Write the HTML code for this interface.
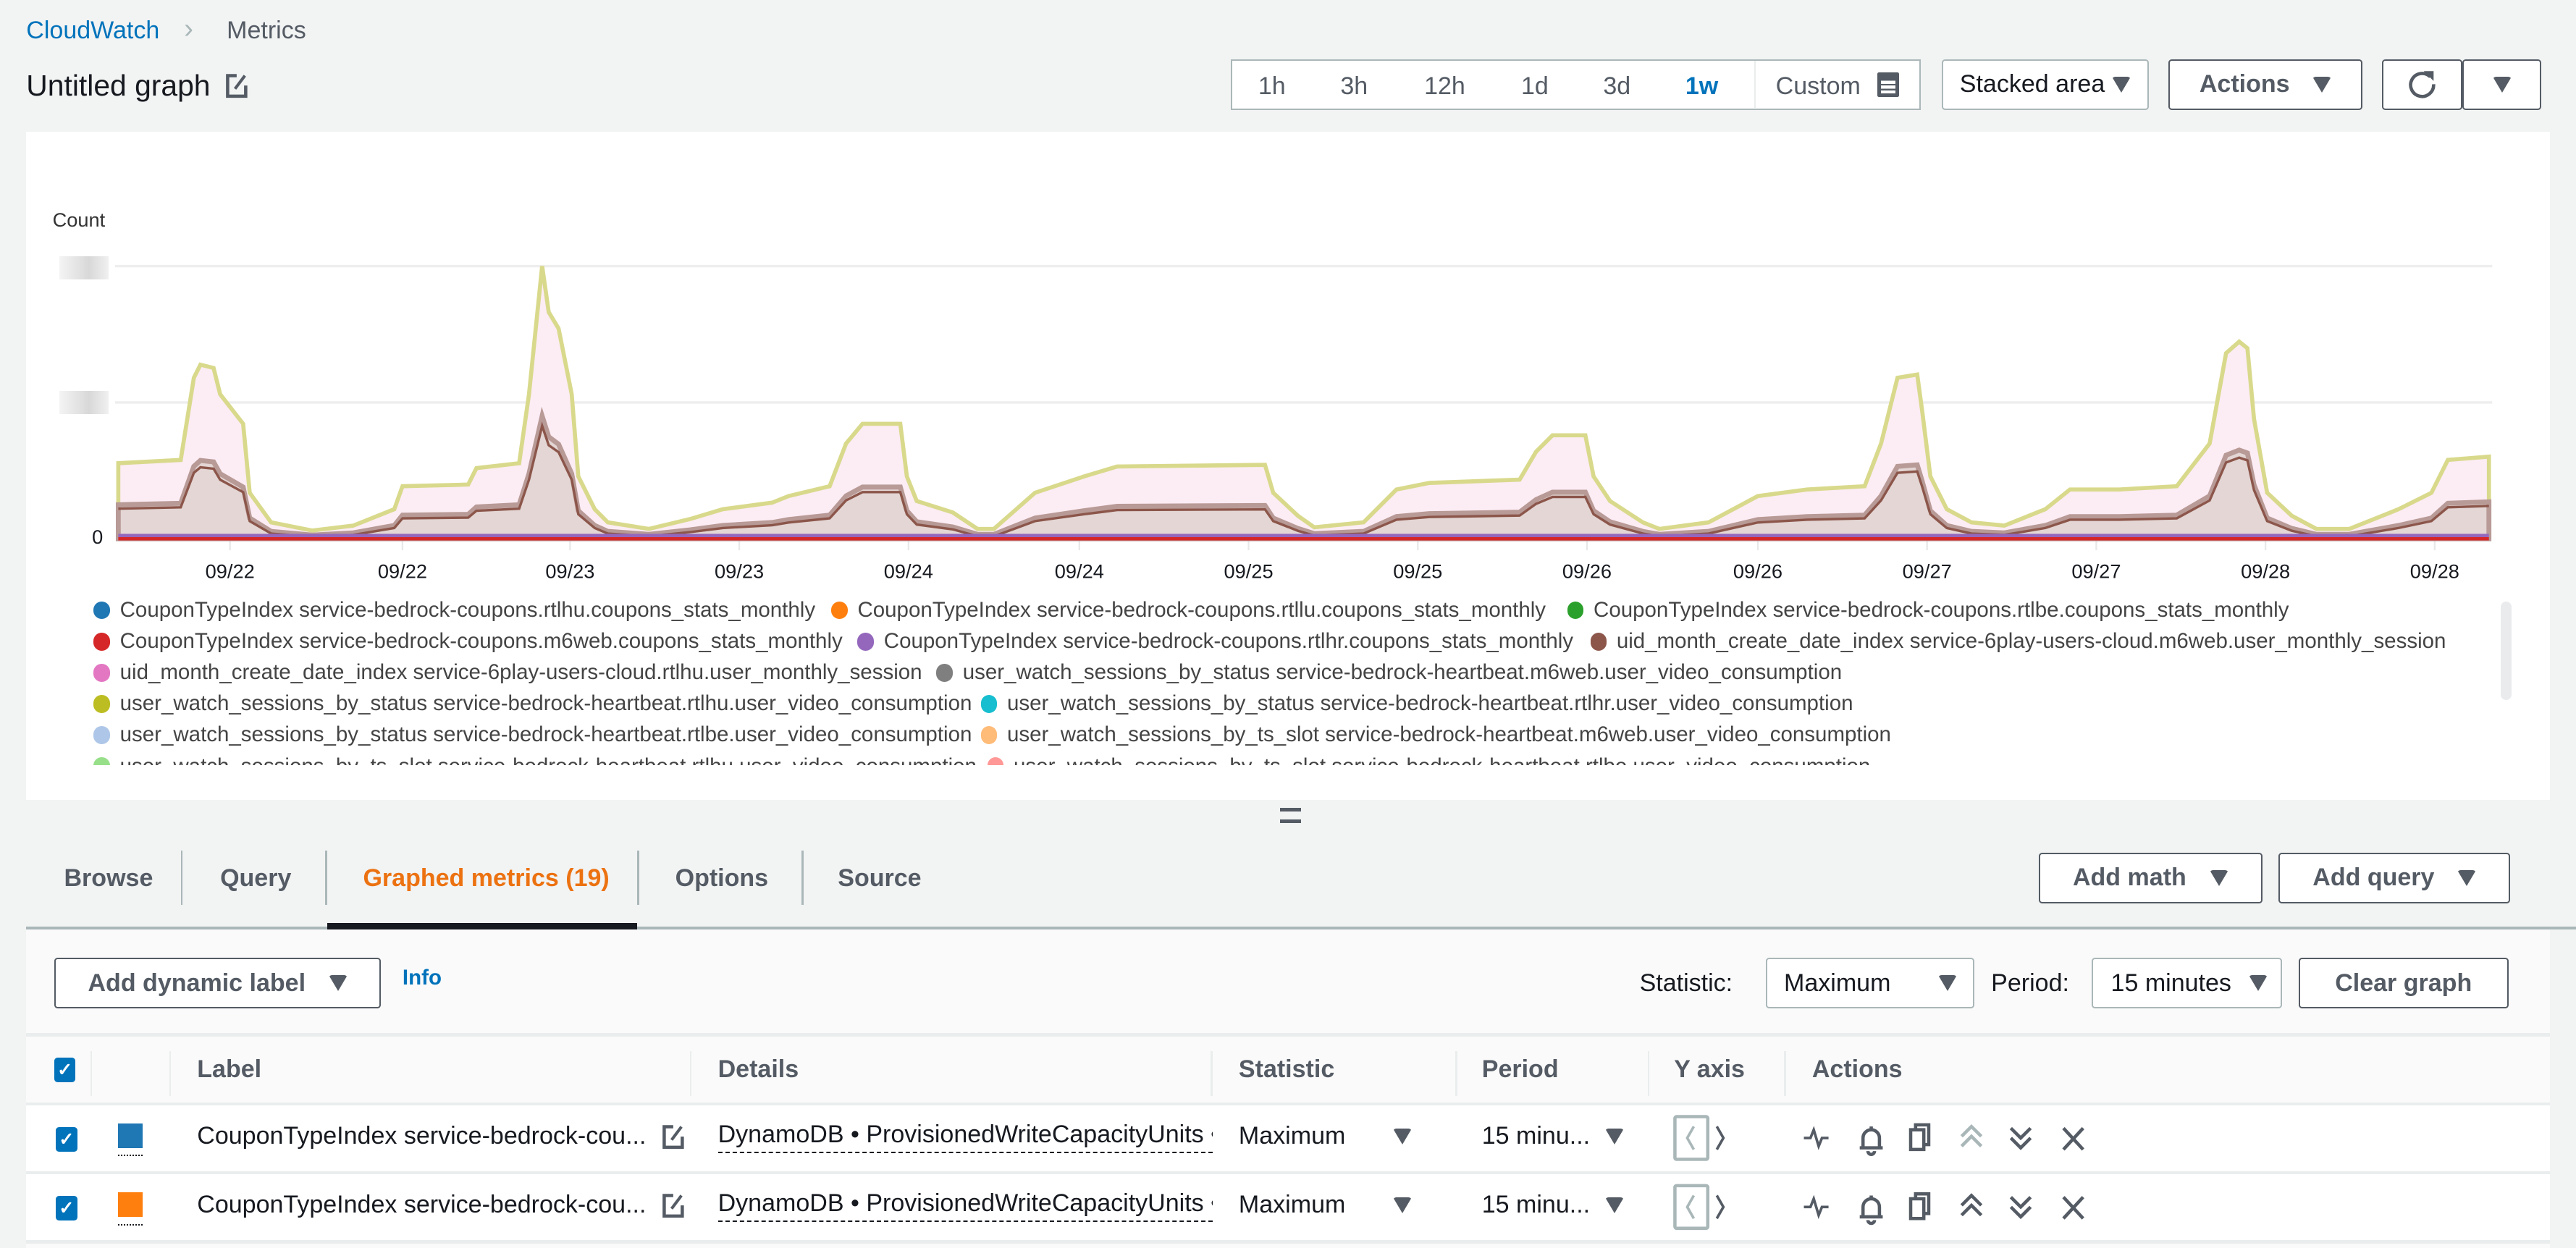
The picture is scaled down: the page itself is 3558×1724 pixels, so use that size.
<!DOCTYPE html>
<html><head><meta charset="utf-8">
<style>
html,body{margin:0;padding:0;background:#f2f3f3;width:3558px;height:1724px;overflow:hidden}
#r{zoom:2.26913;width:1568px;height:760px;position:relative;font-family:"Liberation Sans",sans-serif;color:#16191f;overflow:hidden}
.a{position:absolute}
.btn{position:absolute;box-sizing:border-box;border:1px solid #545b64;border-radius:2px;background:#fff;font-weight:bold;font-size:15px;color:#545b64;display:flex;align-items:center;justify-content:center;gap:14px}
.tri{display:inline-block;width:0;height:0;border-left:6px solid transparent;border-right:6px solid transparent;border-top:10px solid #545b64;border-radius:2px}
.sel{position:absolute;box-sizing:border-box;border:1px solid #aab7b8;border-radius:2px;background:#fff;font-size:15px;display:flex;align-items:center;padding:0 10px;justify-content:space-between}
.lg{position:absolute;left:0;top:362px;width:1520px;height:104px;overflow:hidden;font-size:13px;color:#444}
.lg span{position:absolute;display:flex;align-items:center;height:19px;white-space:nowrap}
.lg i{display:inline-block;width:10px;height:11px;border-radius:5px;margin-right:6px}
.th{position:absolute;top:630px;height:42px;font-weight:bold;font-size:15px;color:#545b64;display:flex;align-items:center}
.cb{position:absolute;width:13px;height:15px;background:#0073bb;border-radius:2px;color:#fff;font-size:11px;font-weight:bold;text-align:center;line-height:15px}
.td{position:absolute;font-size:15px;color:#16191f}
</style></head><body><div id="r">
<div class="a" style="left:16px;top:10px;font-size:15px;color:#0073bb">CloudWatch</div>
<div class="a" style="left:112px;top:8px;font-size:17px;color:#aab7b8">&#x203A;</div>
<div class="a" style="left:138px;top:10px;font-size:15px;color:#545b64">Metrics</div>
<div class="a" style="left:16px;top:42px;font-size:18px">Untitled graph</div>
<svg class="a" style="left:137px;top:44px" width="14" height="16" viewBox="0 0 14 16"><path d="M7 2H1.5v12.5h11V8" fill="none" stroke="#545b64" stroke-width="2"/><path d="M6 10l6-8" stroke="#545b64" stroke-width="1.8"/></svg>

<div class="a" style="left:749px;top:36px;width:420px;height:31px;box-sizing:border-box;border:1px solid #aab7b8;background:#fff;font-size:15px;color:#545b64">
<span class="a" style="left:16px;top:7px">1h</span><span class="a" style="left:66px;top:7px">3h</span><span class="a" style="left:117px;top:7px">12h</span><span class="a" style="left:176px;top:7px">1d</span><span class="a" style="left:226px;top:7px">3d</span><span class="a" style="left:276px;top:7px;color:#0073bb;font-weight:bold">1w</span>
<span class="a" style="left:318px;top:0;width:1px;height:29px;background:#eaeded"></span>
<span class="a" style="left:331px;top:7px">Custom</span>
<span class="a" style="left:393px;top:7px;width:13px;height:15px;background:#545b64;border-radius:1px"></span>
<span class="a" style="left:395px;top:11px;width:9px;height:9px;background:repeating-linear-gradient(#545b64 0 1px,#fff 1px 3px)"></span>
</div>
<div class="sel" style="left:1182px;top:36px;width:126px;height:31px;color:#16191f"><span>Stacked area</span><span class="tri"></span></div>
<div class="btn" style="left:1320px;top:36px;width:118px;height:31px">Actions <span class="tri"></span></div>
<div class="btn" style="left:1450px;top:36px;width:49px;height:31px"><svg width="18" height="18" viewBox="0 0 18 18"><path d="M14 4.5A7 7 0 1 0 16 9" fill="none" stroke="#545b64" stroke-width="2"/><path d="M10 1h6v6z" fill="#545b64"/></svg></div>
<div class="btn" style="left:1499px;top:36px;width:48px;height:31px"><span class="tri"></span></div>

<div class="a" style="left:16px;top:80px;width:1536px;height:407px;background:#fff"></div>
<div class="a" style="left:32px;top:127px;font-size:12px;color:#333">Count</div>
<div class="a" style="left:36px;top:156px;width:30px;height:14px;background:linear-gradient(90deg,#f4f4f4,#e2e2e2 40%,#d8d8d8 60%,#f0f0f0)"></div>
<div class="a" style="left:36px;top:238px;width:30px;height:14px;background:linear-gradient(90deg,#f4f4f4,#e2e2e2 40%,#d8d8d8 60%,#f0f0f0)"></div>
<div class="a" style="left:56px;top:320px;font-size:12px">0</div>
<svg class="a" style="left:0;top:0" width="1568" height="360">
<line x1="70" y1="162" x2="1517" y2="162" stroke="#eee" stroke-width="1.5"/>
<line x1="70" y1="245" x2="1517" y2="245" stroke="#eee" stroke-width="1.5"/>
<g stroke="#e8e8e8"><line x1="140" y1="328" x2="140" y2="335"/><line x1="245" y1="328" x2="245" y2="335"/><line x1="347" y1="328" x2="347" y2="335"/><line x1="450" y1="328" x2="450" y2="335"/><line x1="553" y1="328" x2="553" y2="335"/><line x1="657" y1="328" x2="657" y2="335"/><line x1="760" y1="328" x2="760" y2="335"/><line x1="863" y1="328" x2="863" y2="335"/><line x1="966" y1="328" x2="966" y2="335"/><line x1="1070" y1="328" x2="1070" y2="335"/><line x1="1173" y1="328" x2="1173" y2="335"/><line x1="1276" y1="328" x2="1276" y2="335"/><line x1="1379" y1="328" x2="1379" y2="335"/><line x1="1482" y1="328" x2="1482" y2="335"/></g>
<path d="M72 282L110 280L118 230L122 222L130 224L134 240L148 258L152 300L165 318L190 323L215 320L240 310L245 296L285 295L290 285L316 282L322 240L330 162L334 190L340 200L348 240L352 290L362 310L370 318L395 322L420 316L440 310L470 306L480 302L505 296L515 270L525 258L548 258L552 290L558 305L580 312L595 322L605 322L630 300L660 290L680 284L770 283L775 300L790 314L800 321L830 318L850 298L870 294L925 292L935 275L945 265L965 265L970 290L980 305L1000 318L1010 322L1040 318L1070 302L1100 298L1135 296L1145 270L1155 230L1167 228L1170 250L1175 290L1185 310L1200 318L1220 320L1245 310L1260 298L1290 298L1325 296L1345 270L1355 215L1363 208L1368 212L1372 255L1380 300L1395 314L1410 322L1430 322L1460 310L1480 300L1490 280L1515 278L1515 328L72 328Z" fill="#fcecf4" stroke="#d9d98c" stroke-width="2.5"/>
<g transform="translate(0,328) scale(1,0.45) translate(0,-328)"><path vector-effect="non-scaling-stroke" d="M72 282L110 280L118 230L122 222L130 224L134 240L148 258L152 300L165 318L190 323L215 320L240 310L245 296L285 295L290 285L316 282L322 240L330 162L334 190L340 200L348 240L352 290L362 310L370 318L395 322L420 316L440 310L470 306L480 302L505 296L515 270L525 258L548 258L552 290L558 305L580 312L595 322L605 322L630 300L660 290L680 284L770 283L775 300L790 314L800 321L830 318L850 298L870 294L925 292L935 275L945 265L965 265L970 290L980 305L1000 318L1010 322L1040 318L1070 302L1100 298L1135 296L1145 270L1155 230L1167 228L1170 250L1175 290L1185 310L1200 318L1220 320L1245 310L1260 298L1290 298L1325 296L1345 270L1355 215L1363 208L1368 212L1372 255L1380 300L1395 314L1410 322L1430 322L1460 310L1480 300L1490 280L1515 278L1515 328L72 328Z" fill="#e3d6d4" stroke="#b89a96" stroke-width="3"/></g>
<g transform="translate(0,329) scale(1,0.42) translate(0,-328)"><path vector-effect="non-scaling-stroke" d="M72 282L110 280L118 230L122 222L130 224L134 240L148 258L152 300L165 318L190 323L215 320L240 310L245 296L285 295L290 285L316 282L322 240L330 162L334 190L340 200L348 240L352 290L362 310L370 318L395 322L420 316L440 310L470 306L480 302L505 296L515 270L525 258L548 258L552 290L558 305L580 312L595 322L605 322L630 300L660 290L680 284L770 283L775 300L790 314L800 321L830 318L850 298L870 294L925 292L935 275L945 265L965 265L970 290L980 305L1000 318L1010 322L1040 318L1070 302L1100 298L1135 296L1145 270L1155 230L1167 228L1170 250L1175 290L1185 310L1200 318L1220 320L1245 310L1260 298L1290 298L1325 296L1345 270L1355 215L1363 208L1368 212L1372 255L1380 300L1395 314L1410 322L1430 322L1460 310L1480 300L1490 280L1515 278" fill="none" stroke="#8c564b" stroke-width="1.5"/></g>
<rect x="72" y="325" width="1443" height="2" fill="#9467bd"/><rect x="72" y="327" width="1443" height="2" fill="#d62728"/>
<g font-size="12" fill="#16191f" text-anchor="middle"><text x="140" y="352">09/22</text><text x="245" y="352">09/22</text><text x="347" y="352">09/23</text><text x="450" y="352">09/23</text><text x="553" y="352">09/24</text><text x="657" y="352">09/24</text><text x="760" y="352">09/25</text><text x="863" y="352">09/25</text><text x="966" y="352">09/26</text><text x="1070" y="352">09/26</text><text x="1173" y="352">09/27</text><text x="1276" y="352">09/27</text><text x="1379" y="352">09/28</text><text x="1482" y="352">09/28</text></g>
</svg>
<div class="lg">
<span style="left:57px;top:0"><i style="background:#1f77b4"></i>CouponTypeIndex service-bedrock-coupons.rtlhu.coupons_stats_monthly</span>
<span style="left:506px;top:0"><i style="background:#ff7f0e"></i>CouponTypeIndex service-bedrock-coupons.rtllu.coupons_stats_monthly</span>
<span style="left:954px;top:0"><i style="background:#2ca02c"></i>CouponTypeIndex service-bedrock-coupons.rtlbe.coupons_stats_monthly</span>
<span style="left:57px;top:19px"><i style="background:#d62728"></i>CouponTypeIndex service-bedrock-coupons.m6web.coupons_stats_monthly</span>
<span style="left:522px;top:19px"><i style="background:#9467bd"></i>CouponTypeIndex service-bedrock-coupons.rtlhr.coupons_stats_monthly</span>
<span style="left:968px;top:19px"><i style="background:#8c564b"></i>uid_month_create_date_index service-6play-users-cloud.m6web.user_monthly_session</span>
<span style="left:57px;top:38px"><i style="background:#e377c2"></i>uid_month_create_date_index service-6play-users-cloud.rtlhu.user_monthly_session</span>
<span style="left:570px;top:38px"><i style="background:#7f7f7f"></i>user_watch_sessions_by_status service-bedrock-heartbeat.m6web.user_video_consumption</span>
<span style="left:57px;top:57px"><i style="background:#bcbd22"></i>user_watch_sessions_by_status service-bedrock-heartbeat.rtlhu.user_video_consumption</span>
<span style="left:597px;top:57px"><i style="background:#17becf"></i>user_watch_sessions_by_status service-bedrock-heartbeat.rtlhr.user_video_consumption</span>
<span style="left:57px;top:76px"><i style="background:#aec7e8"></i>user_watch_sessions_by_status service-bedrock-heartbeat.rtlbe.user_video_consumption</span>
<span style="left:597px;top:76px"><i style="background:#ffbb78"></i>user_watch_sessions_by_ts_slot service-bedrock-heartbeat.m6web.user_video_consumption</span>
<span style="left:57px;top:95px"><i style="background:#98df8a"></i>user_watch_sessions_by_ts_slot service-bedrock-heartbeat.rtlhu.user_video_consumption</span>
<span style="left:601px;top:95px"><i style="background:#ff9896"></i>user_watch_sessions_by_ts_slot service-bedrock-heartbeat.rtlbe.user_video_consumption</span>
</div>
<div class="a" style="left:1522px;top:366px;width:7px;height:60px;background:#e9ebed;border-radius:4px"></div>

<div class="a" style="left:779px;top:492px;width:13px;height:2px;background:#545b64"></div>
<div class="a" style="left:779px;top:499px;width:13px;height:2px;background:#545b64"></div>

<div class="a" style="left:39px;top:526px;font-size:15px;font-weight:bold;color:#545b64">Browse</div>
<div class="a" style="left:110px;top:518px;width:1px;height:33px;background:#aab7b8"></div>
<div class="a" style="left:134px;top:526px;font-size:15px;font-weight:bold;color:#545b64">Query</div>
<div class="a" style="left:198px;top:518px;width:1px;height:33px;background:#aab7b8"></div>
<div class="a" style="left:221px;top:526px;font-size:15px;font-weight:bold;color:#ec7211">Graphed metrics (19)</div>
<div class="a" style="left:388px;top:518px;width:1px;height:33px;background:#aab7b8"></div>
<div class="a" style="left:411px;top:526px;font-size:15px;font-weight:bold;color:#545b64">Options</div>
<div class="a" style="left:488px;top:518px;width:1px;height:33px;background:#aab7b8"></div>
<div class="a" style="left:510px;top:526px;font-size:15px;font-weight:bold;color:#545b64">Source</div>
<div class="btn" style="left:1241px;top:519px;width:136px;height:31px">Add math <span class="tri"></span></div>
<div class="btn" style="left:1387px;top:519px;width:141px;height:31px">Add query <span class="tri"></span></div>
<div class="a" style="left:16px;top:564px;width:1552px;height:2px;background:#aab7b8"></div>
<div class="a" style="left:199px;top:562px;width:189px;height:4px;background:#16191f"></div>

<div class="a" style="left:16px;top:566px;width:1536px;height:194px;background:#fafafa"></div>
<div class="btn" style="left:33px;top:583px;width:199px;height:31px">Add dynamic label <span class="tri"></span></div>
<div class="a" style="left:245px;top:588px;font-size:13px;font-weight:bold;color:#0073bb">Info</div>
<div class="a" style="left:998px;top:590px;font-size:15px">Statistic:</div>
<div class="sel" style="left:1075px;top:583px;width:127px;height:31px"><span>Maximum</span><span class="tri"></span></div>
<div class="a" style="left:1212px;top:590px;font-size:15px">Period:</div>
<div class="sel" style="left:1273px;top:583px;width:116px;height:31px;padding:0 8px 0 11px"><span>15 minutes</span><span class="tri"></span></div>
<div class="btn" style="left:1399px;top:583px;width:128px;height:31px">Clear graph</div>

<div class="a" style="left:16px;top:629px;width:1536px;height:2px;background:#eaeded"></div>
<div class="cb" style="left:33px;top:644px">✓</div>
<div class="a" style="left:55px;top:640px;width:1px;height:27px;background:#eaeded"></div>
<div class="a" style="left:103px;top:640px;width:1px;height:27px;background:#eaeded"></div>
<div class="th" style="left:120px">Label</div>
<div class="a" style="left:420px;top:640px;width:1px;height:27px;background:#eaeded"></div>
<div class="th" style="left:437px">Details</div>
<div class="a" style="left:737px;top:640px;width:1px;height:27px;background:#eaeded"></div>
<div class="th" style="left:754px">Statistic</div>
<div class="a" style="left:886px;top:640px;width:1px;height:27px;background:#eaeded"></div>
<div class="th" style="left:902px">Period</div>
<div class="a" style="left:1003px;top:640px;width:1px;height:27px;background:#eaeded"></div>
<div class="th" style="left:1019px">Y axis</div>
<div class="a" style="left:1086px;top:640px;width:1px;height:27px;background:#eaeded"></div>
<div class="th" style="left:1103px">Actions</div>
<div class="a" style="left:16px;top:671px;width:1536px;height:2px;background:#eaeded"></div>

<div class="a" style="left:16px;top:673px;width:1536px;height:40px;background:#fff"></div>
<div class="a" style="left:16px;top:713px;width:1536px;height:2px;background:#eaeded"></div>
<div class="a" style="left:16px;top:715px;width:1536px;height:40px;background:#fff"></div>
<div class="a" style="left:16px;top:755px;width:1536px;height:2px;background:#eaeded"></div>

<div class="cb" style="left:34px;top:686px">✓</div>
<div class="a" style="left:72px;top:684px;width:15px;height:15px;background:#1f77b4"></div>
<div class="a" style="left:72px;top:703px;width:15px;border-top:1px dotted #16191f"></div>
<div class="td" style="left:120px;top:683px">CouponTypeIndex service-bedrock-cou...</div>
<svg class="a" style="left:403px;top:684px" width="14" height="16" viewBox="0 0 14 16"><path d="M7 2H1.5v12.5h11V8" fill="none" stroke="#545b64" stroke-width="2"/><path d="M6 10l6-8" stroke="#545b64" stroke-width="1.8"/></svg>
<div class="td" style="left:437px;top:682px;width:301px;overflow:hidden;white-space:nowrap;border-bottom:1px dashed #16191f;padding-bottom:2px">DynamoDB • ProvisionedWriteCapacityUnits • </div>
<div class="td" style="left:754px;top:683px">Maximum</div><span class="tri a" style="left:848px;top:687px"></span>
<div class="td" style="left:902px;top:683px">15 minu...</div><span class="tri a" style="left:977px;top:687px"></span>
<div class="cb" style="left:34px;top:728px">✓</div>
<div class="a" style="left:72px;top:726px;width:15px;height:15px;background:#ff7f0e"></div>
<div class="a" style="left:72px;top:745px;width:15px;border-top:1px dotted #16191f"></div>
<div class="td" style="left:120px;top:725px">CouponTypeIndex service-bedrock-cou...</div>
<svg class="a" style="left:403px;top:726px" width="14" height="16" viewBox="0 0 14 16"><path d="M7 2H1.5v12.5h11V8" fill="none" stroke="#545b64" stroke-width="2"/><path d="M6 10l6-8" stroke="#545b64" stroke-width="1.8"/></svg>
<div class="td" style="left:437px;top:724px;width:301px;overflow:hidden;white-space:nowrap;border-bottom:1px dashed #16191f;padding-bottom:2px">DynamoDB • ProvisionedWriteCapacityUnits • </div>
<div class="td" style="left:754px;top:725px">Maximum</div><span class="tri a" style="left:848px;top:729px"></span>
<div class="td" style="left:902px;top:725px">15 minu...</div><span class="tri a" style="left:977px;top:729px"></span>

<svg class="a" style="left:1018px;top:678px" width="260" height="80" viewBox="0 0 260 80">
<g fill="none" stroke-width="1.6">
<rect x="1.5" y="2" width="20" height="26" rx="1" stroke="#aab7b8" stroke-width="2"/>
<path d="M13 8l-4 7 4 7" stroke="#aab7b8"/><path d="M27 8l4 7-4 7" stroke="#545b64"/>
<path d="M80 15h4l2-5 3 10 2-5h4" stroke="#545b64"/>
<path d="M114 21h14M116 21v-6a5 5 0 0 1 10 0v6M121 8v2M119 23a2 2 0 0 0 4 0" stroke="#545b64" stroke-width="2"/>
<path d="M145 10h8v12h-8zM148 10V7h8v12h-3" stroke="#545b64" stroke-width="2"/>
<path d="M176 14l6-6 6 6M176 20l6-6 6 6" stroke="#aab7b8" stroke-width="2"/>
<path d="M206 9l6 6 6-6M206 15l6 6 6-6" stroke="#545b64" stroke-width="2"/>
<path d="M238 9l12 13M250 9l-12 13" stroke="#545b64" stroke-width="2"/>
<rect x="1.5" y="44" width="20" height="26" rx="1" stroke="#aab7b8" stroke-width="2"/>
<path d="M13 50l-4 7 4 7" stroke="#aab7b8"/><path d="M27 50l4 7-4 7" stroke="#545b64"/>
<path d="M80 57h4l2-5 3 10 2-5h4" stroke="#545b64"/>
<path d="M114 63h14M116 63v-6a5 5 0 0 1 10 0v6M121 50v2M119 65a2 2 0 0 0 4 0" stroke="#545b64" stroke-width="2"/>
<path d="M145 52h8v12h-8zM148 52V49h8v12h-3" stroke="#545b64" stroke-width="2"/>
<path d="M176 56l6-6 6 6M176 62l6-6 6 6" stroke="#545b64" stroke-width="2"/>
<path d="M206 51l6 6 6-6M206 57l6 6 6-6" stroke="#545b64" stroke-width="2"/>
<path d="M238 51l12 13M250 51l-12 13" stroke="#545b64" stroke-width="2"/>
</g></svg>
</div></body></html>
